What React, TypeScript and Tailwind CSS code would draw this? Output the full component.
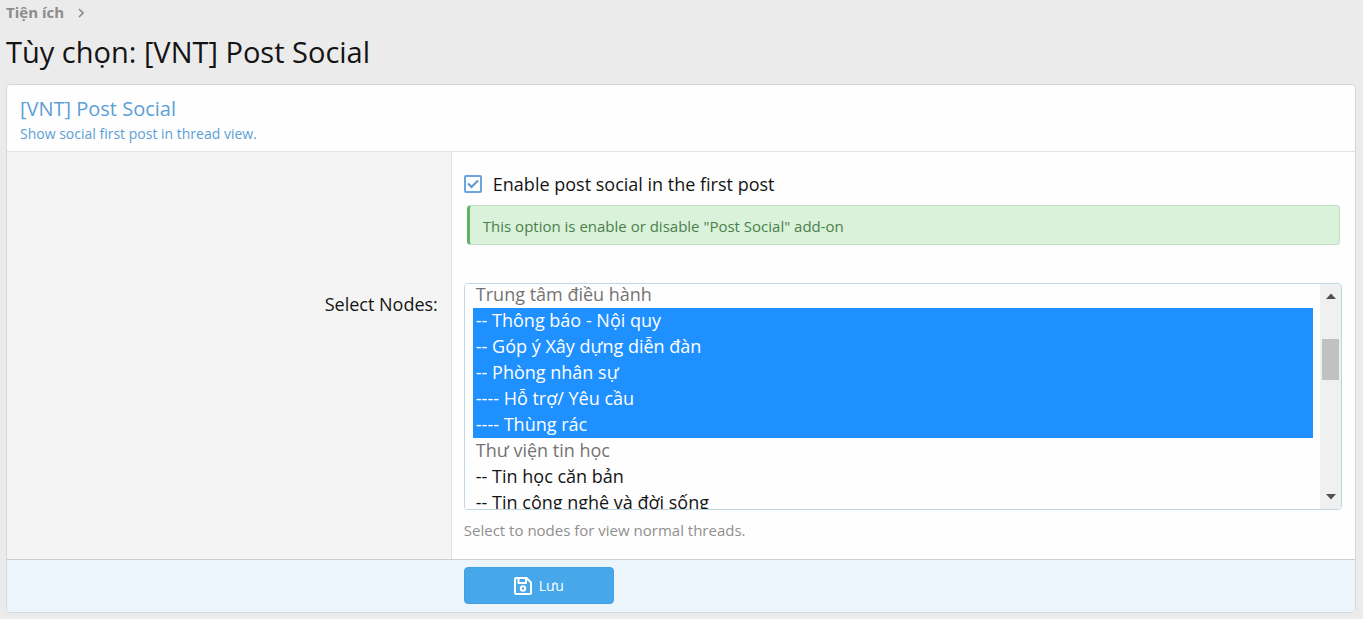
import { useEffect, useRef, useState } from "react";
import type { ReactNode } from "react";

type Node = {
  id: string;
  title: string;
  disabled?: boolean;
};

const nodes: Node[] = [
  { id: "1", title: "Trung tâm điều hành", disabled: true },
  { id: "2", title: "-- Thông báo - Nội quy" },
  { id: "3", title: "-- Góp ý Xây dựng diễn đàn" },
  { id: "4", title: "-- Phòng nhân sự" },
  { id: "5", title: "---- Hỗ trợ/ Yêu cầu" },
  { id: "6", title: "---- Thùng rác" },
  { id: "7", title: "Thư viện tin học", disabled: true },
  { id: "8", title: "-- Tin học căn bản" },
  { id: "9", title: "-- Tin công nghệ và đời sống" },
];

export default function App() {
  return (
    <div className="min-h-screen bg-[#ebebeb] px-[6px] pb-[6px] pr-[7px] font-['Open_Sans',sans-serif] text-[#141414]">
      <Breadcrumb />
      <h1 className="pt-[7px] pb-[12px] text-[29px] leading-[40px]">
        Tùy chọn: [VNT] Post Social
      </h1>
      <form
        className="overflow-hidden rounded-[4px] border border-[#d5d8db] bg-[#fefefe]"
        onSubmit={(e) => e.preventDefault()}
      >
        <PanelHeader />
        <EnableRow />
        <NodesRow />
        <SubmitRow />
      </form>
    </div>
  );
}

const Breadcrumb = () => {
  return (
    <nav className="flex items-center gap-[14px] pt-px pb-px text-[15px] leading-[23px] font-bold text-[#8c8c8c]">
      <a href="#addons">Tiện ích</a>
      <svg width="6" height="10" viewBox="0 0 6 10" fill="none" stroke="currentColor" strokeWidth="1.6">
        <path d="M1 1l4 4-4 4" />
      </svg>
    </nav>
  );
};

const PanelHeader = () => {
  return (
    <header className="border-b border-[#e0e3e5] px-[13px] pt-[10px] pb-[6px] text-[#5c9fd6]">
      <h2 className="text-[20px] leading-[28px]">[VNT] Post Social</h2>
      <p className="text-[14px] leading-[22px]">
        Show social first post in thread view.
      </p>
    </header>
  );
};

type RowProps = {
  label?: ReactNode;
  children: ReactNode;
};

const Row = ({ label, children }: RowProps) => {
  return (
    <div className="flex">
      <div className="w-[33%] shrink-0 border-r border-[#dfe1e3] bg-[#f4f4f4] pt-[20px] pr-[13px] text-right text-[18px] leading-[26px]">
        {label}
      </div>
      <div className="min-w-0 flex-1 pr-[13px] pl-[12px]">{children}</div>
    </div>
  );
};

const EnableRow = () => {
  const [enabled, setEnabled] = useState(true);

  return (
    <Row>
      <div className="pt-[19px] pb-[26px]">
        <label className="flex items-center gap-[11px] text-[18px] leading-[26px]">
          <span className="grid">
            <input
              type="checkbox"
              checked={enabled}
              onChange={(e) => setEnabled(e.target.checked)}
              className="peer col-start-1 row-start-1 size-[18px] appearance-none rounded-[2px] border-2 border-[#6ba5df]"
            />
            <svg
              className="pointer-events-none invisible col-start-1 row-start-1 text-[#5c97c9] peer-checked:visible"
              width="18"
              height="18"
              viewBox="0 0 18 18"
              fill="none"
              stroke="currentColor"
              strokeWidth="2"
            >
              <path d="M4 8.500l3.500 3.500 6.500-6.500" />
            </svg>
          </span>
          Enable post social in the first post
        </label>
        <div className="mt-[8px] mr-[2px] ml-[3px] rounded-[4px] border border-l-[3px] border-[#c0dcc1] border-l-[#63b265] bg-[#daf2d9] px-[13px] pt-[9px] pb-[7px] text-[15px] leading-[22px] text-[#4b7f4d]">
          This option is enable or disable "Post Social" add-on
        </div>
      </div>
    </Row>
  );
};

const NodesRow = () => {
  const [selected, setSelected] = useState(["2", "3", "4", "5", "6"]);
  const listRef = useRef<HTMLSelectElement>(null);

  // the browser scrolls to the first selected option by itself, so wait for it
  useEffect(() => {
    const frame = requestAnimationFrame(() => {
      if (listRef.current) listRef.current.scrollTop = 2;
    });
    return () => cancelAnimationFrame(frame);
  }, []);

  return (
    <Row label={<label htmlFor="nodes">Select Nodes:</label>}>
      <div className="pt-[12px] pb-[17px]">
        <div className="flex h-[227px] overflow-hidden rounded-[4px] border border-[#bfd7e3]">
          <select
            id="nodes"
            ref={listRef}
            multiple
            value={selected}
            onChange={(e) =>
              setSelected(Array.from(e.target.selectedOptions, (o) => o.value))
            }
            className="h-full min-w-0 flex-1 overflow-y-scroll bg-[#fefefe] px-[8px] pr-[7px] text-[18px] outline-none [scrollbar-width:none]"
          >
            {nodes.map((node) => (
              <option
                key={node.id}
                value={node.id}
                disabled={node.disabled}
                className="h-[26px] px-[3px] py-0 leading-[26px] text-[#141414] checked:bg-linear-to-b checked:from-[#1e90ff] checked:to-[#1e90ff] checked:[-webkit-text-fill-color:#fff] disabled:text-[#747474]"
              >
                {node.title}
              </option>
            ))}
          </select>
          <ScrollTrack />
        </div>
        <p className="pt-[9px] text-[15px] leading-[23px] text-[#8f8f8f]">
          Select to nodes for view normal threads.
        </p>
      </div>
    </Row>
  );
};

const ScrollTrack = () => {
  return (
    <div
      aria-hidden="true"
      className="flex w-[21px] flex-col items-center bg-[#f0f0f0] py-[9px] text-[#505050]"
    >
      <svg width="10" height="6" viewBox="0 0 10 6" fill="currentColor">
        <path d="M0 6l5-5.500 5 5.500z" />
      </svg>
      <div className="mt-[40px] h-[41px] w-[17px] bg-[#c1c1c1]" />
      <svg className="mt-auto" width="10" height="6" viewBox="0 0 10 6" fill="currentColor">
        <path d="M0 0l5 5.500 5-5.500z" />
      </svg>
    </div>
  );
};

const SubmitRow = () => {
  return (
    <div className="flex border-t border-[#c9cfd3] bg-[#edf5fc] pt-[7px] pb-[8px]">
      <div className="w-[33%] shrink-0" />
      <div className="px-[12px]">
        <button
          type="submit"
          className="flex h-[37px] w-[150px] items-center justify-center gap-[7px] rounded-[4px] border border-[#439fe0] bg-[#47a7eb] text-[14px] text-white"
        >
          <svg
            width="18"
            height="18"
            viewBox="0 0 18 18"
            fill="none"
            stroke="currentColor"
            strokeWidth="2"
            strokeLinejoin="round"
          >
            <path d="M2 1h10.500L17 5.500V16a1 1 0 0 1-1 1H2a1 1 0 0 1-1-1V2a1 1 0 0 1 1-1z" />
            <path d="M4.500 1v5h7.500V1" />
            <circle cx="9" cy="11.500" r="2.200" />
          </svg>
          Lưu
        </button>
      </div>
    </div>
  );
};
